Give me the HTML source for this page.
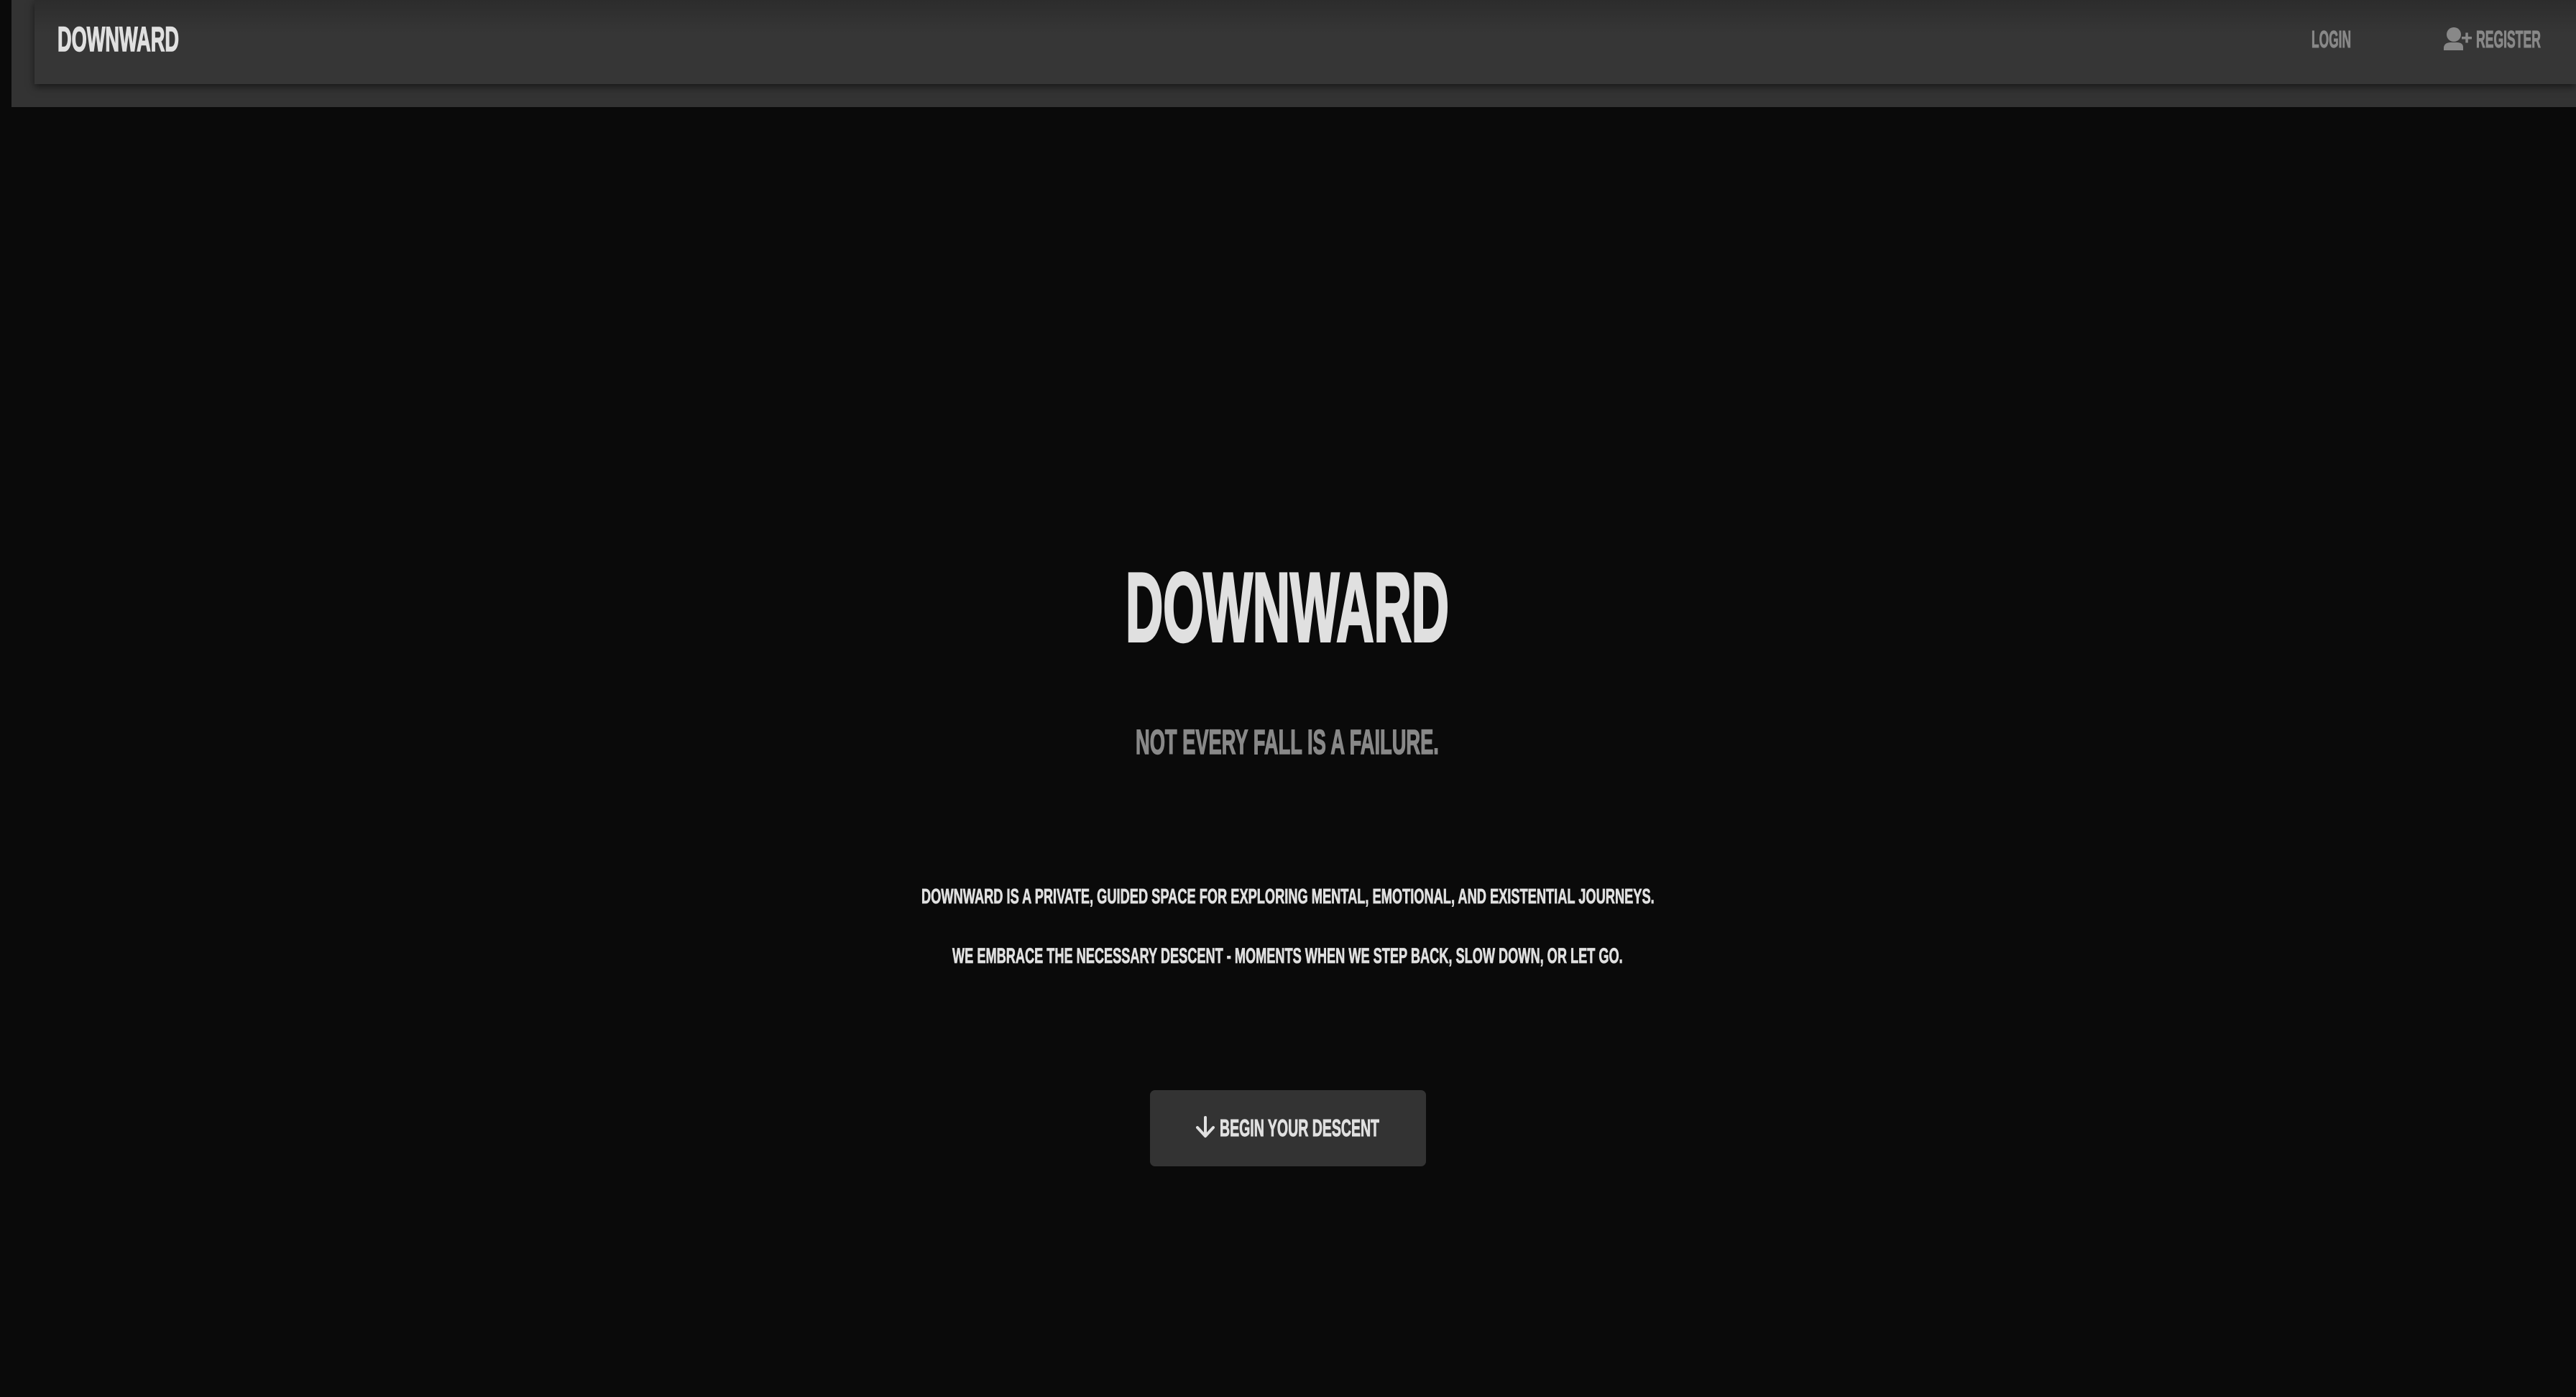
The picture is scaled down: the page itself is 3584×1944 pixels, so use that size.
<!DOCTYPE html>
<html><head><meta charset="utf-8"><style>
html,body{margin:0;padding:0;background:#0a0a0a;width:3584px;height:1944px;overflow:hidden}
.band{position:absolute;left:16px;top:0;width:3568px;height:149px;background:#333}
.nav{position:absolute;left:48px;top:0;width:3536px;height:117px;background:linear-gradient(#2c2c2c,#363636 40%,#363636);box-shadow:0 4px 10px rgba(0,0,0,.55)}
.btn{position:absolute;left:1600px;top:1517px;width:384px;height:106px;background:#333;border-radius:7px}
svg{position:absolute;left:0;top:0}
text{font-family:"Liberation Sans",sans-serif;font-weight:bold}
</style></head><body>
<div class="band"></div>
<div class="nav"></div>
<div class="btn"></div>
<svg width="3584" height="1944" viewBox="0 0 3584 1944">
<text class="f" data-x="80" data-y="71" data-w="169" font-size="48" fill="#e0e0e0" stroke="#e0e0e0" stroke-width="1.5">DOWNWARD</text>
<text class="f" data-x="3216" data-y="66" data-w="55" font-size="33" fill="#888" stroke="#888" stroke-width="1">LOGIN</text>
<circle cx="3414" cy="48" r="10" fill="#888"/>
<path d="M3400 70 L3400 66 Q3401 59 3410 59 L3418 59 Q3427 59 3427 66 L3427 70 Z" fill="#888"/>
<rect x="3425" y="51" width="14" height="3.5" fill="#888"/>
<rect x="3430.3" y="45.5" width="3.5" height="14" fill="#888"/>
<text class="f" data-x="3445" data-y="66" data-w="90" font-size="33" fill="#888" stroke="#888" stroke-width="1">REGISTER</text>
<text class="f" data-x="1566" data-y="892" data-w="450" font-size="136" fill="#e0e0e0" stroke="#e0e0e0" stroke-width="4">DOWNWARD</text>
<text class="f" data-x="1580" data-y="1049" data-w="422" font-size="48" fill="#888" stroke="#888" stroke-width="1.5">NOT EVERY FALL IS A FAILURE.</text>
<text class="f" data-x="1282" data-y="1257" data-w="1020" font-size="29" fill="#e0e0e0" stroke="#e0e0e0" stroke-width="0.8">DOWNWARD IS A PRIVATE, GUIDED SPACE FOR EXPLORING MENTAL, EMOTIONAL, AND EXISTENTIAL JOURNEYS.</text>
<text class="f" data-x="1325" data-y="1340" data-w="933" font-size="30" fill="#e0e0e0" stroke="#e0e0e0" stroke-width="0.8">WE EMBRACE THE NECESSARY DESCENT - MOMENTS WHEN WE STEP BACK, SLOW DOWN, OR LET GO.</text>
<path d="M1677 1555 L1677 1580 M1666 1569 L1677 1581 L1688 1569" stroke="#e0e0e0" stroke-width="4" fill="none" stroke-linecap="round" stroke-linejoin="round"/>
<text class="f" data-x="1697" data-y="1581" data-w="222" font-size="33" fill="#e0e0e0" stroke="#e0e0e0" stroke-width="1">BEGIN YOUR DESCENT</text>
</svg>
<script>
document.querySelectorAll('text.f').forEach(function(t){
  var x=+t.getAttribute('data-x'),y=+t.getAttribute('data-y'),w=+t.getAttribute('data-w');
  var l=t.getComputedTextLength()||w;
  t.setAttribute('transform','translate('+x+' '+y+') scale('+(w/l)+' 1)');
});
</script>
</body></html>
